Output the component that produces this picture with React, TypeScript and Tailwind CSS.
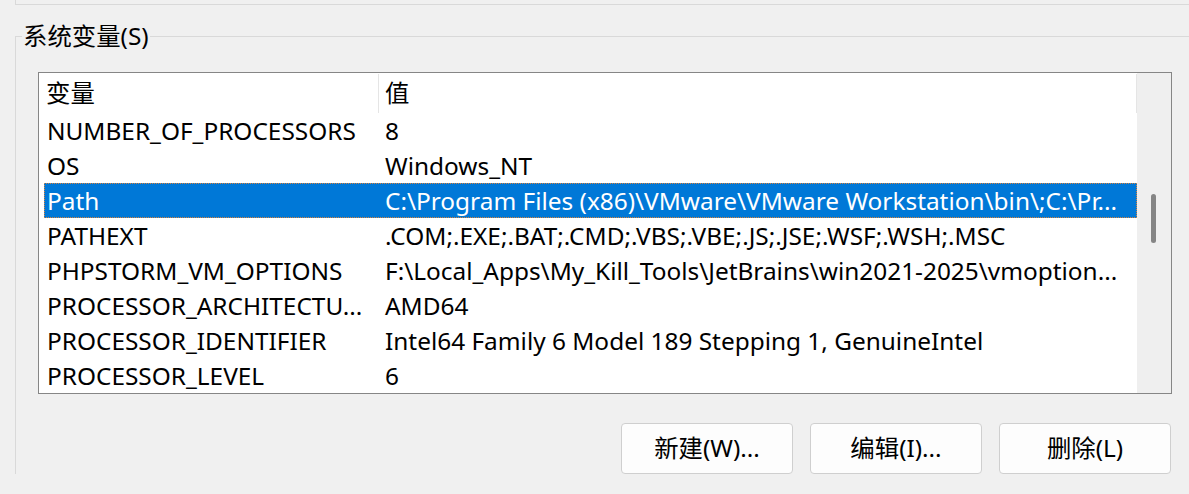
import React from "react";

type EnvVar = { name: string; value: string };

const vars: EnvVar[] = [
  { name: "NUMBER_OF_PROCESSORS", value: "8" },
  { name: "OS", value: "Windows_NT" },
  {
    name: "Path",
    value: "C:\\Program Files (x86)\\VMware\\VMware Workstation\\bin\\;C:\\Pr...",
  },
  { name: "PATHEXT", value: ".COM;.EXE;.BAT;.CMD;.VBS;.VBE;.JS;.JSE;.WSF;.WSH;.MSC" },
  {
    name: "PHPSTORM_VM_OPTIONS",
    value: "F:\\Local_Apps\\My_Kill_Tools\\JetBrains\\win2021-2025\\vmoption...",
  },
  { name: "PROCESSOR_ARCHITECTU...", value: "AMD64" },
  { name: "PROCESSOR_IDENTIFIER", value: "Intel64 Family 6 Model 189 Stepping 1, GenuineIntel" },
  { name: "PROCESSOR_LEVEL", value: "6" },
];

const selected = "Path";

function VarRow({ item }: { item: EnvVar }) {
  const isSel = item.name === selected;
  return (
    <div className="h-[35px] pl-[5px] flex">
      <div
        className={
          isSel
            ? "flex-1 flex items-center pt-[1px] bg-[#0078d7] text-white border border-dotted border-[#d9823c]"
            : "flex-1 flex items-center pt-[1px] border border-transparent"
        }
      >
        <div className="w-[333px] shrink-0 pl-[2px] whitespace-nowrap overflow-hidden">{item.name}</div>
        <div className="flex-1 pl-[7px] whitespace-nowrap overflow-hidden">{item.value}</div>
      </div>
    </div>
  );
}

function VariableList() {
  return (
    <div className="ml-[22px] w-[1134px] h-[322px] border border-[#868686] bg-white flex">
      <div className="w-[1098px] flex flex-col">
        <div className="h-[40px] flex pt-[1px]">
          <div className="w-[340px] pl-[7px] flex items-center border-r border-[#e5e5e5]">变量</div>
          <div className="flex-1 pl-[6px] flex items-center border-r border-[#e5e5e5]">值</div>
        </div>
        {vars.map((v) => (
          <VarRow key={v.name} item={v} />
        ))}
      </div>
      <div className="flex-1 bg-[#efefef] pt-[121px] pl-[14px]">
        <div className="w-[5px] h-[49px] rounded-full bg-[#858585]" />
      </div>
    </div>
  );
}

function DialogButton({ label }: { label: string }) {
  return (
    <button className="w-[172px] h-[51px] rounded-[4px] border border-[#cfcfcf] bg-[#fdfdfd] text-black">
      {label}
    </button>
  );
}

export default function App() {
  return (
    <div
      className="w-[1189px] h-[494px] bg-[#f0f0f0] overflow-hidden text-[24.4px] text-black"
      style={{ fontFamily: '"Noto Sans", "Noto Sans CJK SC", sans-serif' }}
    >
      {/* bottom edge of the user variables group */}
      <div className="ml-[15px] h-[5px] border-l border-b border-[#d9d9d9]" />

      <fieldset className="mt-[19px] ml-[15px] border-l border-t border-[#d9d9d9] min-w-0">
        <legend className="ml-[6px] px-[1px] leading-[24px]">系统变量(S)</legend>
        <div className="mt-[24px]">
          <VariableList />
          <div className="mt-[29px] w-[1155px] flex justify-end gap-[17px]">
            <DialogButton label="新建(W)..." />
            <DialogButton label="编辑(I)..." />
            <DialogButton label="删除(L)" />
          </div>
        </div>
      </fieldset>
    </div>
  );
}
